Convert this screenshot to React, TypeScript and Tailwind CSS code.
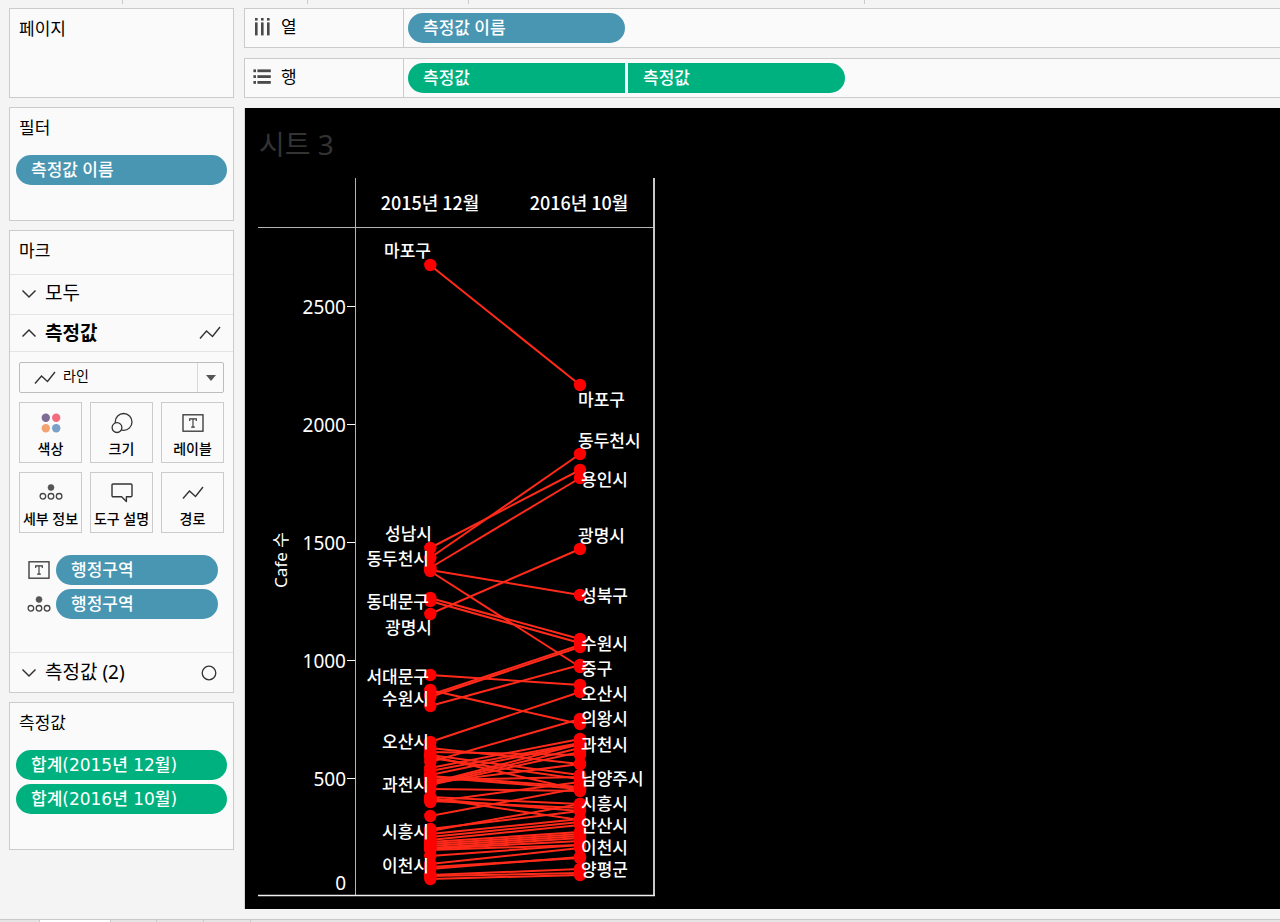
import type { ReactNode } from "react";

const PLOT_LEFT = 430;
const PLOT_RIGHT = 580;

// Vertical positions of each district: [December 2015, October 2016]
const slopes: [number, number][] = [
  [265, 385], [548, 470], [558, 454], [568, 478], [570, 595], [571, 667],
  [598, 639], [601, 643], [614, 549], [675, 685], [690, 724], [695, 645],
  [697, 647], [706, 665], [742, 692], [762, 719], [748, 764], [752, 755],
  [755, 775], [758, 779], [756, 790], [768, 739], [771, 743], [775, 744],
  [783, 744], [784, 748], [783, 764], [785, 752], [777, 789], [776, 787],
  [780, 777], [789, 791], [797, 804], [799, 811], [801, 808], [798, 820],
  [802, 782], [816, 788], [831, 804], [829, 811], [834, 819], [837, 822],
  [840, 825], [842, 832], [844, 834], [846, 836], [848, 838], [849, 841],
  [850, 845], [856, 845], [864, 848], [867, 858], [869, 857], [875, 869],
  [876, 873], [879, 875],
];

const leftLabels: [string, number, number][] = [
  ["마포구", 431, 251], ["성남시", 432, 534], ["동두천시", 429, 559],
  ["동대문구", 429, 602], ["광명시", 432, 628], ["서대문구", 429, 677],
  ["수원시", 429, 699], ["오산시", 429, 742], ["과천시", 429, 785],
  ["시흥시", 429, 832], ["이천시", 429, 866],
];

const rightLabels: [string, number, number][] = [
  ["마포구", 578, 400], ["동두천시", 578, 441], ["용인시", 581, 480],
  ["광명시", 578, 536], ["성북구", 581, 596], ["수원시", 581, 644],
  ["중구", 581, 669], ["오산시", 581, 694], ["의왕시", 581, 719],
  ["과천시", 581, 745], ["남양주시", 581, 779], ["시흥시", 581, 804],
  ["안산시", 581, 826], ["이천시", 581, 848], ["양평군", 581, 870],
];

const ticks: [string, number][] = [
  ["2500", 306], ["2000", 424], ["1500", 542], ["1000", 660], ["500", 778],
];

function LineIcon() {
  return (
    <svg width="22" height="14" viewBox="0 0 22 14" fill="none" stroke="#333" strokeWidth="1.4" aria-hidden="true">
      <path d="M1 12.5 L7.5 5 L13.5 10.5 L21 1" />
    </svg>
  );
}

function Chevron({ up = false }: { up?: boolean }) {
  return (
    <svg width="16" height="10" viewBox="0 0 16 10" fill="none" stroke="#333" strokeWidth="1.5" aria-hidden="true">
      <path d={up ? "M1.5 8.5 L8 2 L14.5 8.5" : "M1.5 1.5 L8 8 L14.5 1.5"} />
    </svg>
  );
}

function LabelIcon() {
  return (
    <svg width="22" height="18" viewBox="0 0 22 18" fill="none" stroke="#333" strokeWidth="1.3" aria-hidden="true">
      <rect x="1" y="0.8" width="20" height="16.4" />
      <path d="M7.7 7 V4.9 H14.3 V7 M11 4.9 V13.1 M9.2 13.1 H12.8" strokeWidth="1.1" />
    </svg>
  );
}

function DetailIcon() {
  return (
    <svg width="24" height="17" viewBox="0 0 24 17" fill="none" stroke="#444" strokeWidth="1.3" aria-hidden="true">
      <circle cx="12" cy="3.5" r="3" fill="#555" stroke="#555" strokeWidth="0.6" />
      <circle cx="3.9" cy="12.3" r="2.8" />
      <circle cx="12" cy="12.3" r="2.8" />
      <circle cx="20.1" cy="12.3" r="2.8" />
    </svg>
  );
}

function ColorIcon() {
  return (
    <svg width="20" height="20" viewBox="0 0 20 20" aria-hidden="true">
      <circle cx="4.8" cy="4.8" r="4.2" fill="#806a96" />
      <circle cx="15.2" cy="4.8" r="4.2" fill="#f26d7e" />
      <circle cx="4.8" cy="15.2" r="4.2" fill="#f1a374" />
      <circle cx="15.2" cy="15.2" r="4.2" fill="#7ba0c9" />
    </svg>
  );
}

function SizeIcon() {
  return (
    <svg width="22" height="22" viewBox="0 0 22 22" fill="none" stroke="#333" strokeWidth="1.3" aria-hidden="true">
      <circle cx="12.6" cy="9.9" r="8.4" />
      <circle cx="6" cy="15.6" r="4.9" fill="#fafafa" />
    </svg>
  );
}

function TooltipIcon() {
  return (
    <svg width="22" height="20" viewBox="0 0 22 20" fill="none" stroke="#333" strokeWidth="1.4" strokeLinejoin="round" aria-hidden="true">
      <path d="M2.2 1 H19.8 Q21 1 21 2.2 V12.6 Q21 13.8 19.8 13.8 H15.4 V18.6 L10.6 13.8 H2.2 Q1 13.8 1 12.6 V2.2 Q1 1 2.2 1 Z" />
    </svg>
  );
}

function ColumnsIcon() {
  return (
    <svg width="18" height="18" viewBox="0 0 18 18" fill="#4a4a4a" aria-hidden="true">
      {[2, 8, 14].map((x) => (
        <g key={x}>
          <rect x={x} y="0" width="2.6" height="2.6" />
          <rect x={x} y="4.4" width="2.6" height="13" />
        </g>
      ))}
    </svg>
  );
}

function RowsIcon() {
  return (
    <svg width="18" height="18" viewBox="0 0 18 18" fill="#4a4a4a" aria-hidden="true">
      {[1.4, 7.2, 13].map((y) => (
        <g key={y}>
          <rect x="0.4" y={y} width="2.6" height="2.8" />
          <rect x="4.4" y={y} width="13.4" height="2.8" />
        </g>
      ))}
    </svg>
  );
}

function Panel({ title, className, children }: { title: string; className: string; children?: ReactNode }) {
  return (
    <section className={`border border-[#cbcbcb] bg-[#fafafa] ${className}`}>
      <h2 className="h-10 pl-[9px] text-[17px] leading-10 font-normal">{title}</h2>
      {children}
    </section>
  );
}

function Pill({ className, children }: { className: string; children: ReactNode }) {
  return (
    <button type="button" className={`block h-[30px] pl-[15px] text-left text-[17px] leading-7 text-white ${className}`}>
      {children}
    </button>
  );
}

function MarkCard({ icon, label }: { icon: ReactNode; label: string }) {
  return (
    <button type="button" className="flex h-[61px] flex-col items-center border border-[#cbcbcb] bg-[#fafafa] pt-[6px]">
      <span className="flex h-7 items-center">{icon}</span>
      <span className="text-[14px] leading-[26px] font-medium whitespace-nowrap">{label}</span>
    </button>
  );
}

function Shelf({ icon, label, children }: { icon: ReactNode; label: string; children: ReactNode }) {
  return (
    <section className="flex h-10 border border-r-0 border-[#cbcbcb] bg-[#fafafa]">
      <div className="flex w-[159px] shrink-0 items-start gap-[10px] border-r border-[#cbcbcb] pt-[9px] pl-[8px]">
        {icon}
        <h2 className="text-[17px] leading-[18px] font-normal">{label}</h2>
      </div>
      <div className="flex gap-[3px] pt-1 pl-1">{children}</div>
    </section>
  );
}

function SlopeChart() {
  return (
    <svg width="400" height="722" viewBox="258 178 400 722" role="img" aria-label="Cafe 수" className="ml-[13px] block shrink-0">
      <g stroke="#b4b4b4" strokeWidth="1">
        <path d="M258 227.5 H654 M355.5 178 V895" />
        <path d="M347 306.5 H355 M347 424.5 H355 M347 542.5 H355 M347 660.5 H355 M347 778.5 H355" stroke="#fff" />
      </g>
      <path d="M654 178 V896" stroke="#c8c8c8" strokeWidth="2" />
      <path d="M258 895.5 H655" stroke="#f0f0f0" strokeWidth="1.4" />

      <g fill="#fff" fontSize="18" fontWeight="500" textAnchor="middle" className="font-['Noto_Sans_CJK_KR',sans-serif]">
        <text x="430" y="210">2015년 12월</text>
        <text x="579" y="210">2016년 10월</text>
      </g>
      <g fill="#fff" fontSize="19" textAnchor="end">
        {ticks.map(([text, y]) => (
          <text key={text} x="346" y={y + 8}>{text}</text>
        ))}
        <text x="346" y="890">0</text>
      </g>
      <text transform="translate(287 560) rotate(-90)" fill="#fff" fontSize="17" textAnchor="middle">Cafe 수</text>

      <g stroke="#ff2a1a" strokeWidth="2">
        {slopes.map(([a, b], i) => (
          <line key={i} x1={PLOT_LEFT} y1={a} x2={PLOT_RIGHT} y2={b} />
        ))}
      </g>
      <g fill="#ff0000">
        {slopes.map(([a, b], i) => (
          <g key={i}>
            <circle cx={PLOT_LEFT + 0.3} cy={a} r="6.2" />
            <circle cx={PLOT_RIGHT} cy={b} r="6.2" />
          </g>
        ))}
      </g>
      <g fill="#fff" fontSize="17" fontWeight="500">
        {leftLabels.map(([name, x, y]) => (
          <text key={name} x={x} y={y + 6} textAnchor="end">{name}</text>
        ))}
        {rightLabels.map(([name, x, y]) => (
          <text key={name} x={x} y={y + 6}>{name}</text>
        ))}
      </g>
    </svg>
  );
}

export default function App() {
  return (
    <div className="flex min-h-screen flex-col overflow-hidden bg-[#f4f4f4] font-['Noto_Sans','Noto_Sans_CJK_KR',sans-serif] text-black">
      <header className="flex h-2">
        <div className="h-1 w-[123px] border-r border-[#cbcbcb]" />
        <div className="h-1 w-[185px] border-r border-[#cbcbcb]" />
        <div className="h-1 w-[161px] border-r border-[#cbcbcb]" />
        <div className="h-1 w-[396px] border-r border-[#cbcbcb]" />
      </header>

      <main className="flex flex-1 gap-[10px] pl-[9px]">
        <aside className="flex w-[225px] shrink-0 flex-col gap-[9px]">
          <Panel title="페이지" className="h-[90px]" />

          <Panel title="필터" className="h-[114px]">
            <div className="px-[6px] pt-[7px]">
              <Pill className="w-full rounded-full bg-[#4996b2] font-medium">측정값 이름</Pill>
            </div>
          </Panel>

          <Panel title="마크" className="">
            <button type="button" className="mt-[3px] flex h-10 w-full items-center gap-2 border-t border-[#e4e4e4] pb-[2px] pl-[11px] text-[19px]">
              <Chevron />
              모두
            </button>
            <button type="button" className="flex h-[37px] w-full items-center gap-2 border-t border-[#e4e4e4] pr-3 pl-[11px] text-[19px] font-bold">
              <Chevron up />
              <span className="flex-1 text-left">측정값</span>
              <LineIcon />
            </button>
            <div className="border-t border-[#e4e4e4] px-[9px] pt-[10px]">
              <div className="relative">
                <select aria-label="마크 유형" className="block h-[31px] w-full appearance-none rounded-xs border border-[#bdbdbd] bg-[#fafafa] pb-1 pl-[43px] text-[14px]">
                  <option>라인</option>
                </select>
                <span className="pointer-events-none absolute top-[9px] left-[15px]">
                  <LineIcon />
                </span>
                <span className="pointer-events-none absolute top-px right-px bottom-px flex w-[26px] items-center justify-center border-l border-[#d8d8d8]">
                  <svg width="10" height="6" viewBox="0 0 10 6" aria-hidden="true">
                    <path d="M0 0 H10 L5 6 Z" fill="#555" />
                  </svg>
                </span>
              </div>
              <div className="mt-[9px] grid grid-cols-3 gap-x-2 gap-y-[9px]">
                <MarkCard icon={<ColorIcon />} label="색상" />
                <MarkCard icon={<SizeIcon />} label="크기" />
                <MarkCard icon={<LabelIcon />} label="레이블" />
                <MarkCard icon={<DetailIcon />} label="세부 정보" />
                <MarkCard icon={<TooltipIcon />} label="도구 설명" />
                <MarkCard icon={<LineIcon />} label="경로" />
              </div>
              <div className="mt-[22px] flex flex-col gap-1 pr-[6px] pl-[8px]">
                <div className="flex items-center gap-[5px]">
                  <span className="flex w-6 justify-center"><LabelIcon /></span>
                  <Pill className="flex-1 rounded-full bg-[#4996b2] font-medium">행정구역</Pill>
                </div>
                <div className="flex items-center gap-[5px]">
                  <span className="flex w-6 justify-center"><DetailIcon /></span>
                  <Pill className="flex-1 rounded-full bg-[#4996b2] font-medium">행정구역</Pill>
                </div>
              </div>
            </div>
            <button type="button" className="mt-[33px] flex h-10 w-full items-center gap-2 border-t border-[#e4e4e4] pr-4 pl-[11px] text-[19px]">
              <Chevron />
              <span className="flex-1 text-left">측정값 (2)</span>
              <svg width="16" height="16" viewBox="0 0 16 16" fill="none" stroke="#333" strokeWidth="1.3" aria-hidden="true">
                <circle cx="8" cy="8" r="6.8" />
              </svg>
            </button>
          </Panel>

          <Panel title="측정값" className="h-[148px]">
            <div className="flex flex-col gap-1 px-[6px] pt-[7px] font-['DejaVu_Sans','Noto_Sans_CJK_KR',sans-serif]">
              <Pill className="w-full rounded-full bg-[#00b180] font-medium">합계(2015년 12월)</Pill>
              <Pill className="w-full rounded-full bg-[#00b180] font-medium">합계(2016년 10월)</Pill>
            </div>
          </Panel>
        </aside>

        <div className="flex min-w-0 flex-1 flex-col gap-[10px]">
          <Shelf icon={<ColumnsIcon />} label="열">
            <Pill className="w-[217px] rounded-full bg-[#4996b2] font-medium">측정값 이름</Pill>
          </Shelf>
          <Shelf icon={<RowsIcon />} label="행">
            <Pill className="w-[217px] rounded-l-full bg-[#00b180] font-medium">측정값</Pill>
            <Pill className="w-[217px] rounded-r-full bg-[#00b180] font-medium">측정값</Pill>
          </Shelf>
          <section className="flex-1 border-l border-[#d4d4d4] bg-black pb-[9px]">
            <h1 className="h-[70px] pl-[14px] text-[28px] leading-[72px] font-normal text-[#333]">시트 3</h1>
            <SlopeChart />
          </section>
        </div>
      </main>

      <footer className="mt-[10px] flex h-[3px] border-t border-[#c8c8c8] bg-[#e4e4e4]">
        <div className="w-10 border-r border-[#c8c8c8]" />
        <div className="w-[71px] border-r border-[#c8c8c8] bg-white" />
        <div className="w-[46px] border-r border-[#c8c8c8]" />
        <div className="w-[47px] border-r border-[#c8c8c8]" />
        <div className="w-[47px] border-r border-[#c8c8c8]" />
      </footer>
    </div>
  );
}
